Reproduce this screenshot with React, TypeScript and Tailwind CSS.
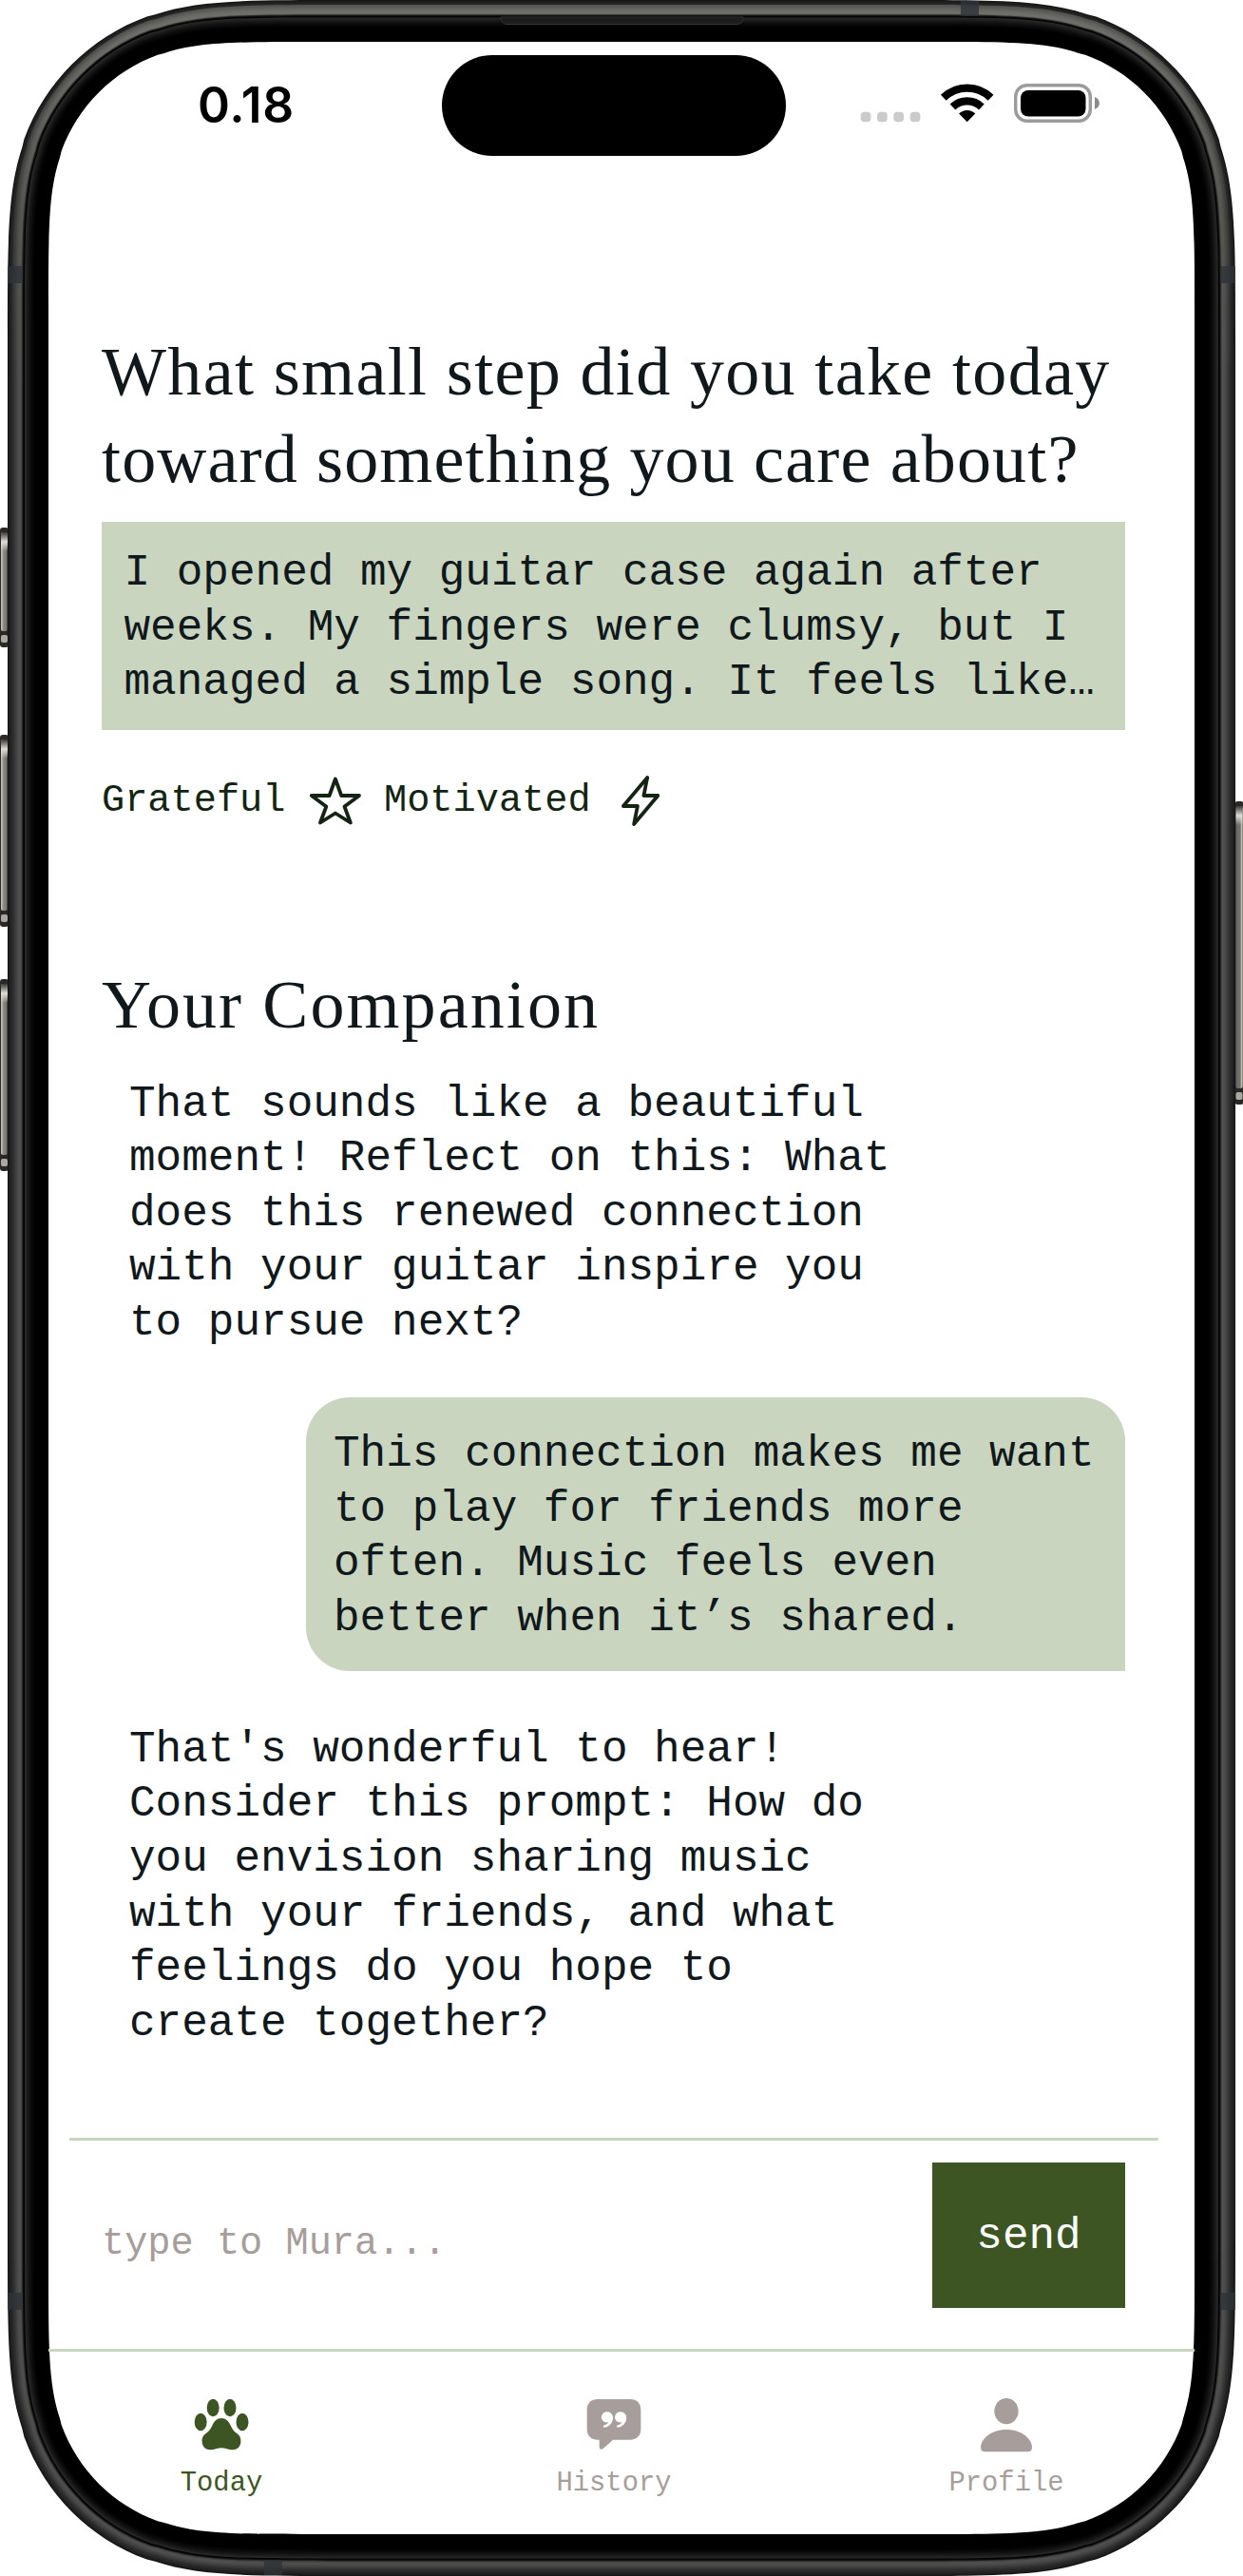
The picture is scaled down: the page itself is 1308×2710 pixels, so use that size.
import React from "react";

const W = 1308;
const H = 2710;

/* Continuous-curvature rounded rectangle. */
function squircle(x: number, y: number, w: number, h: number, r: number) {
  const a = 1.52866 * r, b = 1.08849 * r, c = 0.86841 * r, d = 0.66993 * r, e = 0.0655 * r;
  const f = 0.63149 * r, g = 0.07491 * r, i = 0.37282 * r, j = 0.16906 * r;
  const R = x + w, B = y + h;
  return [
    `M${x + a} ${y}L${R - a} ${y}`,
    `C${R - b} ${y} ${R - c} ${y} ${R - d} ${y + e}L${R - f} ${y + g}`,
    `C${R - i} ${y + j} ${R - j} ${y + i} ${R - g} ${y + f}L${R - e} ${y + d}`,
    `C${R} ${y + c} ${R} ${y + b} ${R} ${y + a}L${R} ${B - a}`,
    `C${R} ${B - b} ${R} ${B - c} ${R - e} ${B - d}L${R - g} ${B - f}`,
    `C${R - j} ${B - i} ${R - i} ${B - j} ${R - f} ${B - g}L${R - d} ${B - e}`,
    `C${R - c} ${B} ${R - b} ${B} ${R - a} ${B}L${x + a} ${B}`,
    `C${x + b} ${B} ${x + c} ${B} ${x + d} ${B - e}L${x + f} ${B - g}`,
    `C${x + i} ${B - j} ${x + j} ${B - i} ${x + g} ${B - f}L${x + e} ${B - d}`,
    `C${x} ${B - c} ${x} ${B - b} ${x} ${B - a}L${x} ${y + a}`,
    `C${x} ${y + b} ${x} ${y + c} ${x + e} ${y + d}L${x + g} ${y + f}`,
    `C${x + j} ${y + i} ${x + i} ${y + j} ${x + f} ${y + g}L${x + d} ${y + e}`,
    `C${x + c} ${y} ${x + b} ${y} ${x + a} ${y}Z`,
  ].join("");
}

const inset = (n: number) =>
  squircle(8 + n, n * 1.023, 1292 - 2 * n, H - 2 * n * 1.023, 232 - (n * 50) / 43);

/* Metal and glass shades, from the outer edge inwards. */
const SHADES = [
  "#161616", "#1c1c1c", "#202020", "#242424", "#282828", "#2b2c2b", "#303130", "#363736",
  "#3c3d3c", "#424342", "#474847", "#4b4c4b", "#4e4f4e", "#4f4f4e", "#444443", "#2a2a29",
  "#0c0c0c", "#020202", "#282828", "#232323", "#1e1e1e", "#191919", "#141414", "#101010",
  "#0c0c0c", "#090909", "#060606", "#030303", "#010101", "#000000",
];

function SideButton({ x, y, h, flip }: { x: number; y: number; h: number; flip?: boolean }) {
  return (
    <g>
      <rect x={x} y={y} width="9" height={h} rx="3" fill="#2a2826" />
      <rect x={x + 1} y={y + 5} width="7" height={h - 22} rx="2" fill={flip ? "url(#btnR)" : "url(#btnL)"} />
      <rect x={x + 1} y={y + 5} width="7" height="20" rx="2" fill="url(#btnTop)" />
      <rect x={x + 1} y={y + h - 13} width="7" height="8" rx="2" fill="#aaa7a1" />
    </g>
  );
}

function PhoneBody() {
  return (
    <svg className="absolute inset-0" width={W} height={H} viewBox={`0 0 ${W} ${H}`} aria-hidden="true">
      <defs>
        <linearGradient id="btnL" x1="0" x2="1">
          <stop offset="0" stopColor="#cfccc5" />
          <stop offset="0.4" stopColor="#8a8782" />
          <stop offset="0.8" stopColor="#7a7772" />
          <stop offset="1" stopColor="#3a3835" />
        </linearGradient>
        <linearGradient id="btnR" x1="1" x2="0">
          <stop offset="0" stopColor="#efece4" />
          <stop offset="0.35" stopColor="#75726c" />
          <stop offset="1" stopColor="#6a6762" />
        </linearGradient>
        <linearGradient id="btnTop" x1="0" x2="0" y1="0" y2="1">
          <stop offset="0" stopColor="#3a3835" />
          <stop offset="0.5" stopColor="#e0ddd6" />
          <stop offset="1" stopColor="#e0ddd6" stopOpacity="0" />
        </linearGradient>
        <linearGradient id="shine" x1="0" x2="0" y1="0" y2="1">
          <stop offset="0" stopColor="#e8e4d8" stopOpacity="0.22" />
          <stop offset="0.08" stopColor="#e8e4d8" stopOpacity="0.06" />
          <stop offset="0.15" stopColor="#e8e4d8" stopOpacity="0" />
        </linearGradient>
      </defs>
      <SideButton x={0} y={555} h={126} />
      <SideButton x={0} y={773} h={202} />
      <SideButton x={0} y={1030} h={202} />
      <SideButton x={1299.5} y={843} h={319} flip />
      {SHADES.map((shade, n) => (
        <path key={n} d={inset(n)} fill={shade} />
      ))}
      <path d={inset(5) + inset(15)} fillRule="evenodd" fill="url(#shine)" />
      <g fill="#303337" opacity="0.8">
        <rect x="8" y="280" width="16" height="18" />
        <rect x="1284" y="280" width="16" height="18" />
        <rect x="8" y="2412" width="16" height="18" />
        <rect x="1284" y="2412" width="16" height="18" />
        <rect x="1011" y="1" width="19" height="16" />
        <rect x="278" y="2693" width="19" height="16" />
      </g>
      <path d="M527 18c0 4 2 7.500 6 7.500h243c4 0 6-3.500 6-7.500z" fill="#1c1c1c" stroke="#333" strokeWidth="1" />
      <path d={squircle(51, 44, 1206, 2622, 182)} fill="#fff" />
    </svg>
  );
}

function StatusBar() {
  return (
    <div className="relative h-[226px] shrink-0">
      <span className="absolute left-[157px] top-[31.5px] font-[Inter] text-[51.5px] font-semibold leading-[68px] tracking-[0.7px] text-black">
        0.18
      </span>
      <div className="absolute left-[414px] top-[14px] h-[106px] w-[362px] rounded-full bg-black" />
      <svg className="absolute left-[854px] top-[42px]" width="256" height="46" viewBox="905 86 256 46" aria-hidden="true">
        {[905.7, 923, 940.3, 957.7].map((x) => (
          <rect key={x} x={x} y="117.700" width="10.700" height="10.500" rx="3.800" fill="#cbcbcb" />
        ))}
        <g fill="none" stroke="#000" strokeWidth="8.200">
          <path d="M992.800 102.700a35.600 35.600 0 0 1 49.800 0" />
          <path d="M1002.500 112.500a22 22 0 0 1 30.400 0" />
        </g>
        <path d="M1017.700 128.300l-8.600-8.700a12.300 12.300 0 0 1 17.200 0z" fill="#000" />
        <rect x="1068.700" y="89.700" width="78.600" height="37.600" rx="12" fill="none" stroke="#9b9b9b" strokeWidth="3.400" />
        <rect x="1074" y="95" width="68.500" height="27.500" rx="8" fill="#000" />
        <path d="M1152 102c3.500 1.200 4.800 3.800 4.800 6.500s-1.300 5.300-4.800 6.500z" fill="#8a8a8a" />
      </svg>
    </div>
  );
}

function StarIcon() {
  return (
    <svg width="54" height="52" viewBox="326 817 54 52" fill="none" stroke="#142412" strokeWidth="3.800" strokeLinejoin="round" aria-hidden="true">
      <path d="M352.900 819.500L359.200 837H378L362.500 848.500L368.800 865.500L352.900 855.500L337 865.500L343.300 848.500L327.800 837H346.600Z" />
    </svg>
  );
}

function BoltIcon() {
  return (
    <svg width="40" height="54" viewBox="654.500 816 40 54" fill="none" stroke="#142412" strokeWidth="3.800" strokeLinejoin="round" aria-hidden="true">
      <path d="M681.700 818L677.900 837H692.800L667.600 867L671.400 848H656.400Z" />
    </svg>
  );
}

function PawIcon() {
  return (
    <svg width="58" height="56" viewBox="613 402 174 168" fill="#3d5522" aria-hidden="true">
      <ellipse cx="634.500" cy="477" rx="19.500" ry="27.500" />
      <ellipse cx="673.500" cy="432" rx="19.500" ry="27.500" />
      <ellipse cx="727" cy="432" rx="19.500" ry="27.500" />
      <ellipse cx="766" cy="477" rx="19.500" ry="27.500" />
      <path d="M700 465c14 0 22 9 28 21c8 16 10 19 22 28c10 8 12 16 11 27c-1 15-12 24-26 24c-12 0-22-6-35-6s-23 6-35 6c-14 0-25-9-26-24c-1-11 1-19 11-27c12-9 14-12 22-28c6-12 14-21 28-21z" />
    </svg>
  );
}

function QuoteBubbleIcon() {
  return (
    <svg width="58" height="56" viewBox="532 251 174 168" aria-hidden="true">
      <path
        d="M568 254H670C692 254 704 267 704 288V347C704 369 692 382 670 382H616L586 409C580 414 573 413 573 405V382H568C546 382 534 369 534 347V288C534 267 546 254 568 254Z"
        fill="#a79d9b"
      />
      <g fill="#fff">
        <path d="M597 293.500c11 0 19 8 19 20c0 14-11 28-26 29.500c-6 .5-6-6-1-7.500c7-2 11-5 13-9c-13 3-22.500-5-22.500-15.500c0-10 8-17.500 17.500-17.500z" />
        <path d="M639.500 293.500c11 0 19 8 19 20c0 14-11 28-26 29.500c-6 .5-6-6-1-7.500c7-2 11-5 13-9c-13 3-22.500-5-22.500-15.500c0-10 8-17.500 17.500-17.500z" />
      </g>
    </svg>
  );
}

function PersonIcon() {
  return (
    <svg width="58" height="58" viewBox="488 399 174 174" fill="#a79d9b" aria-hidden="true">
      <ellipse cx="575" cy="440" rx="38" ry="41" />
      <path d="M508 568C499 568 494 563 494 554C494 530 524 498 575 498S656 530 656 554C656 563 651 568 642 568Z" />
    </svg>
  );
}

function Lines({ lines }: { lines: string[] }) {
  return (
    <>
      {lines.map((line) => (
        <span key={line} className="block whitespace-pre">
          {line}
        </span>
      ))}
    </>
  );
}

function CompanionMessage({ lines }: { lines: string[] }) {
  return (
    <p className="self-start px-[29px] pb-[26px] pt-[31.6px]">
      <Lines lines={lines} />
    </p>
  );
}

function UserMessage({ lines }: { lines: string[] }) {
  return (
    <p className="w-[862px] self-end rounded-[46px] rounded-br-none bg-[#c9d5bf] px-[29px] pb-[26px] pt-[31.6px]">
      <Lines lines={lines} />
    </p>
  );
}

function Tab({ icon, label, active }: { icon: React.ReactNode; label: string; active?: boolean }) {
  return (
    <div className={"flex w-[124px] flex-col items-center " + (active ? "text-[#3d5522]" : "text-[#a79d9b]")}>
      <div className="flex h-[72px] items-start">{icon}</div>
      <span className="text-[28.8px] leading-[36px]">{label}</span>
    </div>
  );
}

export default function App() {
  return (
    <div className="relative flex h-[2710px] w-[1308px] flex-col overflow-hidden bg-white pl-[51px] pr-[51px] pt-[44px]">
      <PhoneBody />
      <main className="relative flex h-[2622px] w-[1206px] flex-col font-['Liberation_Mono',monospace] text-[46px] leading-[57.6px] text-[#10181c]">
        <StatusBar />

        <section className="ml-[56px] mt-[75px] w-[1077px]">
          <h1 className="font-['Liberation_Serif',serif] text-[72px] leading-[92px]">
            <span className="block whitespace-pre tracking-[1.35px]">What small step did you take today</span>
            <span className="block whitespace-pre tracking-[1.15px]">toward something you care about?</span>
          </h1>
          <p className="mt-[20px] h-[219px] bg-[#c9d5bf] pl-[23.5px] pt-[26px]">
            <Lines
              lines={[
                "I opened my guitar case again after",
                "weeks. My fingers were clumsy, but I",
                "managed a simple song. It feels like…",
              ]}
            />
          </p>
          <div className="mt-[46px] flex h-[58px] items-center text-[40.3px] text-[#142412]">
            <span className="w-[219px]">Grateful</span>
            <StarIcon />
            <span className="ml-[24px] w-[250px]">Motivated</span>
            <BoltIcon />
          </div>
        </section>

        <section className="ml-[56px] mt-[140px] flex w-[1077px] flex-col">
          <h2 className="h-[90px] font-['Liberation_Serif',serif] text-[72px] leading-[90px] tracking-[2.1px]">Your Companion</h2>
          <div className="flex flex-col gap-[22.8px]">
            <CompanionMessage
              lines={[
                "That sounds like a beautiful",
                "moment! Reflect on this: What",
                "does this renewed connection",
                "with your guitar inspire you",
                "to pursue next?",
              ]}
            />
            <UserMessage
              lines={[
                "This connection makes me want",
                "to play for friends more",
                "often. Music feels even",
                "better when it’s shared.",
              ]}
            />
            <CompanionMessage
              lines={[
                "That's wonderful to hear!",
                "Consider this prompt: How do",
                "you envision sharing music",
                "with your friends, and what",
                "feelings do you hope to",
                "create together?",
              ]}
            />
          </div>
        </section>

        <div className="absolute bottom-0 left-0 w-full">
          <div className="ml-[22px] flex h-[222px] w-[1146px] items-start justify-between border-t-3 border-[#c7d6bf] pl-[34px] pr-[35px] pt-[23px]">
            <span className="mt-[57px] text-[40.3px] text-[#a79d9b]">type to Mura...</span>
            <button className="h-[153px] w-[203px] bg-[#3d5522] pt-[5px] text-white">send</button>
          </div>
          <nav className="flex h-[195px] justify-between border-t-3 border-[#c7d6bf] pl-[120px] pr-[136px] pt-[49px]">
            <Tab icon={<PawIcon />} label="Today" active />
            <Tab icon={<QuoteBubbleIcon />} label="History" />
            <Tab icon={<PersonIcon />} label="Profile" />
          </nav>
        </div>
      </main>
    </div>
  );
}
